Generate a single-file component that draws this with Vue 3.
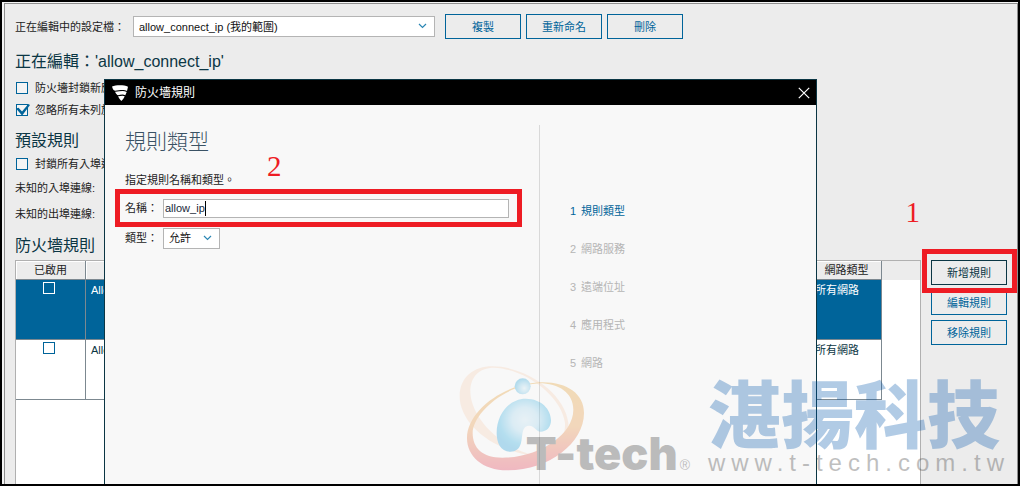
<script setup>
import { ref } from 'vue'

const profile = ref('allow_connect_ip (我的範圍)')
const blockNew = ref(false)
const ignoreUnlisted = ref(true)
const blockInbound = ref(false)
const ruleName = ref('allow_ip')
const ruleType = ref('允許')
const steps = ['規則類型', '網路服務', '遠端位址', '應用程式', '網路']
const rules = ref([
  { id: 1, enabled: false, name: 'Allow', network: '所有網路', selected: true },
  { id: 2, enabled: false, name: 'Allow', network: '所有網路', selected: false }
])
</script>

<template>
  <div class="frame">
    <main class="window">
      <div class="toolbar">
        <label for="profile" class="profile-label">正在編輯中的設定檔：</label>
        <span class="select-wrap profile-select">
          <select id="profile" v-model="profile">
            <option>allow_connect_ip (我的範圍)</option>
          </select>
          <svg class="chevron" viewBox="0 0 9 6"><path d="M1 1 L4.500 4.500 L8 1" /></svg>
        </span>
        <div class="toolbar-buttons">
          <button type="button" class="btn">複製</button>
          <button type="button" class="btn">重新命名</button>
          <button type="button" class="btn">刪除</button>
        </div>
      </div>

      <h2 class="editing">正在編輯：'allow_connect_ip'</h2>
      <label class="check-row"><input v-model="blockNew" type="checkbox" class="check" />防火墻封鎖新應</label>
      <label class="check-row"><input v-model="ignoreUnlisted" type="checkbox" class="check" />忽略所有未列於</label>

      <h2 class="preset">預設規則</h2>
      <label class="check-row"><input v-model="blockInbound" type="checkbox" class="check" />封鎖所有入埠連</label>
      <p class="line">未知的入埠連線:</p>
      <p class="line">未知的出埠連線:</p>

      <h2 class="rules-title">防火墻規則</h2>
      <div class="rules">
        <div class="table-panel">
          <table>
            <colgroup><col class="col-on" /><col /><col class="col-net" /><col class="col-rest" /></colgroup>
            <thead>
              <tr><th>已啟用</th><th></th><th>網路類型</th><th class="rest"></th></tr>
            </thead>
            <tbody>
              <tr v-for="rule in rules" :key="rule.id" :class="{ selected: rule.selected }">
                <td class="on"><input v-model="rule.enabled" type="checkbox" class="check" aria-label="已啟用" /></td>
                <td>{{ rule.name }}</td>
                <td class="net">{{ rule.network }}</td>
                <td class="rest"></td>
              </tr>
            </tbody>
          </table>
        </div>
        <div class="side-buttons">
          <span class="mark-button"><button type="button" class="btn strong">新增規則</button></span>
          <button type="button" class="btn">編輯規則</button>
          <button type="button" class="btn">移除規則</button>
        </div>
      </div>
    </main>

    <section class="dialog" role="dialog" aria-labelledby="dialog-title">
      <header class="titlebar">
        <svg class="logo" viewBox="0 0 16 16">
          <path d="M0 1.500 C4 0 12 -.2 16 1.800 L15 6 C11 3.600 6 6 2.200 5.600 C1 4.500 .4 3 0 1.500Z" />
          <path d="M3 6.700 C7 6.900 11 5 14.700 7 L13.300 10.300 C10.500 8.400 8 10.400 5.300 10.100 C4.300 9 3.500 7.900 3 6.700Z" />
          <path d="M6 11.200 C8.500 11.300 10.500 10 12.700 11.300 C11.800 13.300 10.700 14.800 9.300 16 C7.900 14.700 6.800 13 6 11.200Z" />
        </svg>
        <h1 id="dialog-title">防火墻規則</h1>
        <button type="button" class="close" aria-label="關閉">
          <svg viewBox="0 0 12 12"><path d="M.8 .8 L11.200 11.200 M11.200 .8 L.8 11.200" /></svg>
        </button>
      </header>
      <div class="dialog-body">
        <form class="form" @submit.prevent>
          <h2 class="form-title">規則類型</h2>
          <p class="desc">指定規則名稱和類型。</p>
          <div class="field marked">
            <label for="rule-name">名稱：</label>
            <span class="input-wrap">
              <input id="rule-name" v-model="ruleName" type="text" />
              <i class="caret"></i>
            </span>
          </div>
          <div class="field">
            <label for="rule-type">類型：</label>
            <span class="select-wrap type-select">
              <select id="rule-type" v-model="ruleType"><option>允許</option></select>
              <svg class="chevron" viewBox="0 0 9 6"><path d="M1 1 L4.500 4.500 L8 1" /></svg>
            </span>
          </div>
        </form>
        <ol class="steps">
          <li v-for="(step, i) in steps" :key="step" :class="{ current: i === 0 }">
            <span>{{ i + 1 }}</span>{{ step }}
          </li>
        </ol>
      </div>
      <span class="note note-two">2</span>
    </section>

    <span class="note note-one">1</span>

    <div class="watermark">
      <svg class="emblem" viewBox="0 0 390 330">
        <defs>
          <linearGradient id="ring" x1="0" y1="0" x2="0" y2="1">
            <stop offset="0" stop-color="#e39a22" /><stop offset=".5" stop-color="#e68c32" /><stop offset="1" stop-color="#dd2745" />
          </linearGradient>
          <radialGradient id="body" cx=".52" cy=".4" r=".58">
            <stop offset="0" stop-color="#c2e2f2" /><stop offset=".4" stop-color="#9bd2ed" /><stop offset=".8" stop-color="#1ca5dc" /><stop offset="1" stop-color="#0d94d4" />
          </radialGradient>
          <radialGradient id="head" cx=".6" cy=".62" r=".6">
            <stop offset="0" stop-color="#cce8f4" /><stop offset=".5" stop-color="#73c3e6" /><stop offset="1" stop-color="#0d99d4" />
          </radialGradient>
        </defs>
        <g transform="translate(-54 -40)">
          <path fill="#f7cfb2" fill-rule="evenodd" d="M160 50 C105 50 62 82 62 140 C62 225 170 316 320 322 C370 318 392 270 388 220 C378 130 260 50 160 50Z M165 54 C120 54 94 82 94 125 C94 200 180 295 290 318 C350 316 380 270 378 220 C368 140 260 58 165 54Z" />
          <path fill="url(#ring)" fill-rule="evenodd" d="M300 98 C380 94 435 130 435 190 C435 280 330 362 205 362 C130 362 84 320 84 265 C84 185 190 105 300 98Z M300 101 C360 101 403 130 403 180 C403 255 300 324 190 324 C130 324 101 295 101 250 C101 195 190 108 300 101Z" />
          <circle fill="url(#head)" cx="251" cy="110" r="24" />
          <path fill="url(#body)" d="M260 147 C308 147 336 180 336 212 C336 234 322 246 305 246 C291 246 287 228 271 228 C246 228 252 260 246 280 C241 298 230 306 214 306 C185 306 173 280 173 250 C173 195 210 147 260 147Z" />
        </g>
      </svg>
      <span class="brand">T-tech</span>
      <span class="registered">®</span>
      <div class="company">
        <span class="company-name">湛揚科技</span>
        <span class="company-url">www.t-tech.com.tw</span>
      </div>
    </div>
  </div>
</template>

<style>
body { margin: 0; background: #000; }
</style>

<style scoped>
* { box-sizing: border-box; }
.frame {
  position: relative;
  display: flex;
  height: 100vh;
  min-height: 420px;
  overflow: hidden;
  border: 2px solid #000;
  background: #f4f4f4;
  color: #222;
  font: 11px/16px "Liberation Sans", "Noto Sans CJK TC", sans-serif;
}
.window {
  flex: 1;
  display: flex;
  flex-direction: column;
  min-width: 0;
  margin: 1px 0 0 2px;
  padding: 10px 10px 0;
  border: 1px solid #8e8e8e;
  border-bottom: 0;
  background: #ececec;
}
h1, h2, p { margin: 0; font-weight: 400; }
h2 { margin-top: 7px; font-size: 16px; line-height: 24px; color: #0b3644; }
h2.editing { margin: 11px 0 3px; }
h2.preset { margin-top: 8px; }
h2.rules-title { margin-bottom: 2px; }
button, input, select { margin: 0; font: inherit; border-radius: 0; outline: 0; }

.toolbar { display: flex; align-items: center; }
.profile-label { width: 118px; white-space: nowrap; }
.toolbar-buttons { display: flex; gap: 5px; margin-left: 10px; }
.select-wrap { position: relative; display: flex; }
.select-wrap select {
  width: 100%;
  height: 21px;
  padding: 0 5px;
  appearance: none;
  border: 1px solid #b4b4b4;
  background: #fff;
  color: #111;
}
.profile-select { width: 302px; }
.type-select { width: 57px; }
.chevron {
  position: absolute;
  right: 8px;
  top: 7px;
  width: 9px;
  height: 6px;
  fill: none;
  stroke: #2a86b4;
  stroke-width: 1.2;
  pointer-events: none;
}
.btn {
  width: 76px;
  height: 25px;
  padding: 0;
  border: 1px solid #00649a;
  background: #ececec;
  color: #00649a;
}
.btn.strong { border-color: #0b3644; color: #0b3644; }

.check-row { display: flex; align-items: center; gap: 7px; height: 22px; padding-left: 1px; white-space: nowrap; }
.check {
  flex: none;
  width: 12px;
  height: 12px;
  appearance: none;
  border: 1px solid #00649a;
  background: #fff;
}
.check-row .check { background: #f4f4f4; }
.check-row .check:checked::before {
  content: "";
  display: block;
  width: 14px;
  height: 11px;
  margin: -1px 0 0 -1px;
  background: #00649a;
  clip-path: polygon(0 40%, 18% 34%, 43% 68%, 88% 0, 100% 8%, 47% 100%, 40% 100%);
}
.line { line-height: 26px; }

.rules { display: flex; flex: 1; gap: 10px; min-height: 0; }
.table-panel { flex: 1; min-width: 0; border: 1px solid #b0b0b0; border-bottom: 0; background: #fff; }
table { width: 100%; table-layout: fixed; border-collapse: separate; border-spacing: 0; }
.col-on, .col-net { width: 70px; }
.col-rest { width: 38px; }
th {
  height: 19px;
  padding: 0;
  border: solid #7c8890;
  border-width: 0 1px 1px 0;
  background: #ececec;
  box-shadow: inset 1px 1px #fff;
  font-weight: 400;
  line-height: 18px;
}
th.rest { border: 0; box-shadow: none; }
td {
  height: 60px;
  padding: 2px 5px;
  border: solid #7c8890;
  border-width: 0 1px 1px 0;
  color: #0b3644;
  vertical-align: top;
}
td.rest { border: 0; }
td.net { padding-left: 3px; }
td.on { padding: 2px 3px 0 0; line-height: 12px; }
td.on .check { display: block; margin: 0 auto; }
.selected td:not(.rest) { background: #00649a; color: #fff; }
.selected .check { border-color: #fff; background: transparent; }
.side-buttons { display: flex; flex-direction: column; gap: 5px; }
.mark-button { position: relative; display: flex; }
.mark-button::after {
  content: "";
  position: absolute;
  z-index: 1;
  inset: -11px -10px -8px -9px;
  border: 5px solid #ee1c24;
  pointer-events: none;
}

.dialog {
  position: absolute;
  inset: 77px 201px 0 102px;
  display: flex;
  flex-direction: column;
  border: 1px solid #0b3644;
  border-bottom: 0;
  background: #f8f8f8;
}
.titlebar { display: flex; align-items: center; height: 25px; padding: 0 6px 0 7px; background: #000; color: #fff; }
.logo { width: 16px; height: 16px; fill: #fff; }
.titlebar h1 { flex: 1; margin-left: 7px; font-size: 12px; line-height: 24px; }
.close { display: flex; padding: 0; border: 0; background: none; }
.close svg { width: 12px; height: 12px; fill: none; stroke: #fff; stroke-width: 1.2; }
.dialog-body { display: flex; flex: 1; padding-top: 20px; }
.form { flex: 1; padding: 0 17px 0 20px; }
.form-title { margin: 0; font-size: 21px; font-weight: 300; line-height: 34px; color: #3a5264; }
.desc { margin-top: 13px; line-height: 17px; }
.field { display: flex; align-items: center; height: 22px; }
.field label { width: 38px; white-space: nowrap; }
.field.marked { height: 38px; margin-left: -10px; padding: 0 8px 0 5px; border: 5px solid #ee1c24; }
.input-wrap { position: relative; flex: 1; display: flex; }
.input-wrap input { width: 100%; height: 19px; padding: 0 1px; border: 1px solid #b4b4b4; background: #fff; color: #1a2a3a; }
.caret { position: absolute; left: 42px; top: 2px; width: 1px; height: 15px; background: #000; }
.steps { width: 277px; margin: 0; padding: 67px 0 0 30px; border-left: 1px solid #d9d9d9; list-style: none; color: #b5b5b5; }
.steps li { line-height: 38px; }
.steps span { display: inline-block; width: 11px; }
.steps .current { color: #00649a; }

.note { position: absolute; font: 29px/30px "Liberation Serif", serif; color: #ee1c24; }
.note-two { left: 162px; top: 71px; }
.note-one { right: 98px; top: 195px; }

.watermark {
  position: absolute;
  right: 8px;
  bottom: 6px;
  display: flex;
  align-items: flex-end;
  opacity: .3;
  pointer-events: none;
  white-space: nowrap;
}
.emblem { flex: none; width: 130px; height: 110px; margin-bottom: 5px; }
.brand { margin-left: -61px; font: 900 45px/48px Inter, "Liberation Sans", sans-serif; color: #303030; }
.registered { margin: 0 18px 0 2px; font-size: 14px; line-height: 26px; color: #303030; }
.company { display: flex; flex-direction: column; }
.company-name { font: 900 73px/76px "Noto Sans CJK TC", sans-serif; color: #0055ab; }
.company-url { font-size: 24px; line-height: 30px; letter-spacing: 6px; color: #303030; }
</style>
